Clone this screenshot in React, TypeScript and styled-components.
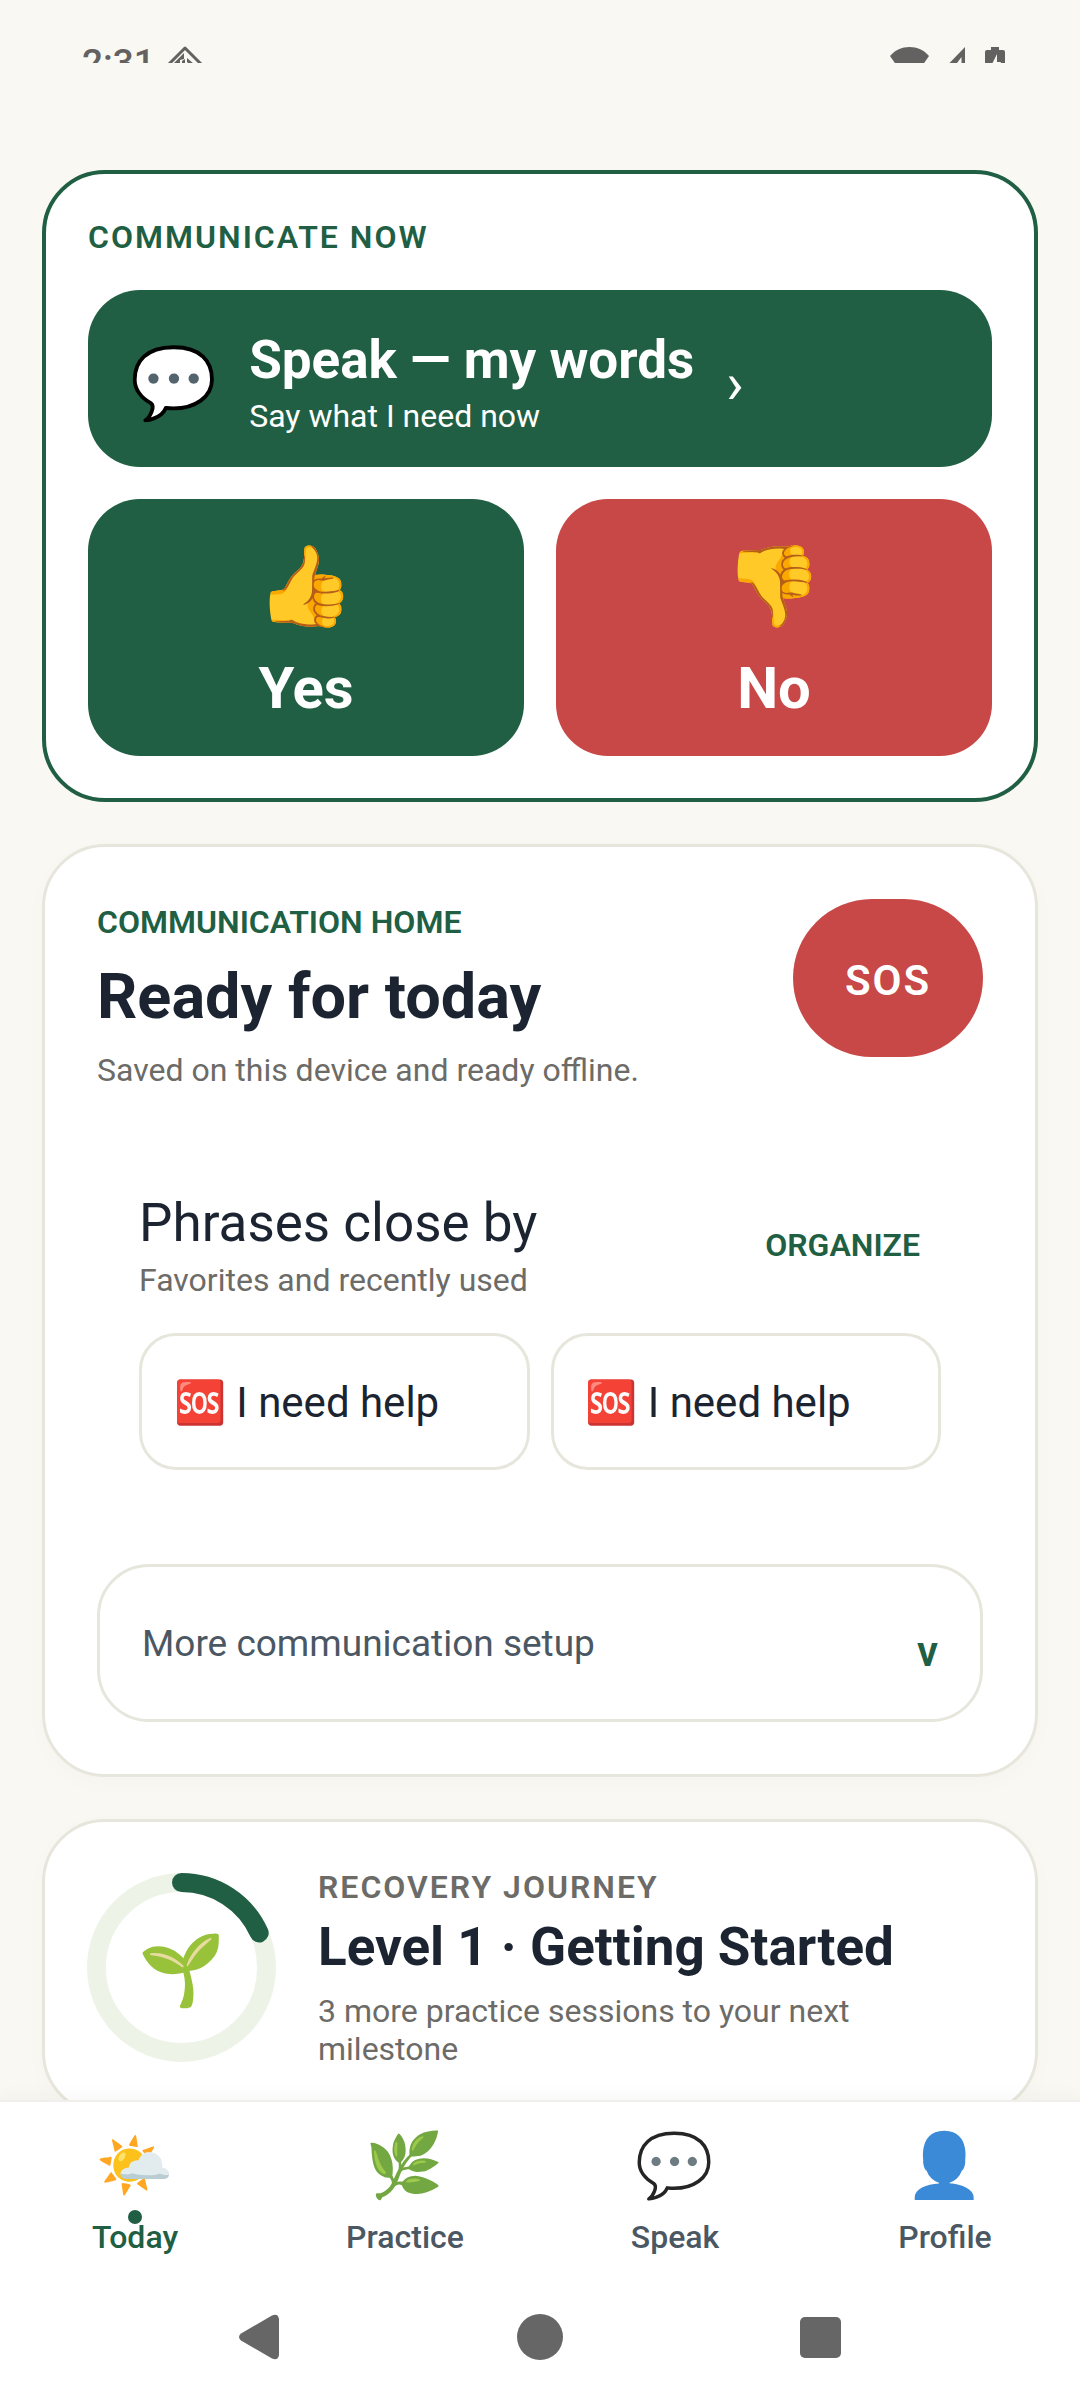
import React, { useState } from 'react';
import styled, { createGlobalStyle, css } from 'styled-components';

const c = {
  page: '#f9f8f3',
  surface: '#ffffff',
  green: '#205f43',
  red: '#c84747',
  ink: '#1b2430',
  slate: '#4b5863',
  muted: '#6c6b67',
  line: '#e7e6dc',
  ring: '#edf4e7',
  system: '#636260',
};

const Global = createGlobalStyle`
  *, *::before, *::after { box-sizing: border-box; }
  body {
    margin: 0;
    background: ${c.page};
    color: ${c.ink};
    font-family: Roboto, 'Noto Sans', sans-serif;
    -webkit-font-smoothing: antialiased;
  }
  h1, h2, h3, p { margin: 0; font-weight: 400; }
  button {
    margin: 0;
    padding: 0;
    border: 0;
    background: none;
    color: inherit;
    font: inherit;
    text-align: left;
    cursor: pointer;
  }
`;

const Screen = styled.div`
  display: flex;
  flex-direction: column;
  height: 100vh;
`;

/* ---------- system chrome ---------- */

const StatusBar = styled.header`
  display: flex;
  justify-content: space-between;
  flex: none;
  height: 63px;
  padding: 41px 75px 0 82px;
  overflow: hidden;
  color: ${c.system};
`;

const StatusGroup = styled.div<{ $gap: number }>`
  display: flex;
  align-items: flex-start;
  gap: ${(p) => p.$gap}px;
  height: 44px;
`;

const Clock = styled.time`
  font-size: 37px;
  line-height: 44px;
  font-weight: 500;
`;

const StatusIcon = styled.svg`
  display: block;
  flex: none;
  margin-top: 5px;
  fill: currentColor;
`;

const SystemBar = styled.div`
  display: flex;
  height: 126px;
  padding: 0 11%;
`;

const SystemButton = styled.button`
  display: flex;
  flex: 1;
  align-items: center;
  justify-content: center;
  color: #666666;

  svg {
    display: block;
    fill: currentColor;
  }
`;

/* ---------- shared type ---------- */

const Overline = styled.p<{ $tone?: 'green' | 'muted'; $tracked?: boolean }>`
  font-size: 32px;
  line-height: 42px;
  font-weight: 600;
  color: ${(p) => (p.$tone === 'muted' ? c.muted : c.green)};
  letter-spacing: ${(p) => (p.$tracked ? '2px' : 'normal')};
`;

const Title = styled.h2<{ $bold?: boolean }>`
  font-size: 53px;
  line-height: 64px;
  font-weight: ${(p) => (p.$bold ? 700 : 400)};
`;

const Caption = styled.p`
  font-size: 32px;
  line-height: 38px;
  color: ${c.muted};
`;

const Emoji = styled.span<{ $size: number; $dim?: boolean }>`
  display: block;
  flex: none;
  font-family: 'Noto Color Emoji', sans-serif;
  font-size: ${(p) => p.$size}px;
  line-height: 1;
  opacity: ${(p) => (p.$dim ? 0.85 : 1)};
`;

/* ---------- cards ---------- */

const Feed = styled.main`
  display: flex;
  flex: 1;
  flex-direction: column;
  gap: 42px;
  min-height: 0;
  padding: 107px 42px 42px;
  overflow-y: auto;
  scrollbar-width: none;
`;

const Card = styled.section`
  flex: none;
  border: 3px solid ${c.line};
  border-radius: 63px;
  background: ${c.surface};
  box-shadow: 0 6px 24px rgba(60, 60, 40, 0.02);
`;

const NowCard = styled(Card)`
  display: flex;
  flex-direction: column;
  gap: 32px;
  padding: 42px;
  border: 4px solid ${c.green};
  box-shadow: none;
`;

const SpeakButton = styled.button`
  display: flex;
  align-items: center;
  gap: 32px;
  padding: 38px 42px 30px;
  border-radius: 52px;
  background: ${c.green};
  color: #ffffff;
`;

const SpeakText = styled.span`
  display: flex;
  flex-direction: column;
  gap: 3px;
`;

const SpeakTitle = styled.span`
  font-size: 53px;
  line-height: 64px;
  font-weight: 700;
`;

const SpeakHint = styled.span`
  font-size: 32px;
  line-height: 42px;
`;

const Chevron = styled.span`
  font-size: 58px;
  line-height: 64px;
`;

const AnswerRow = styled.div`
  display: grid;
  grid-template-columns: 1fr 1fr;
  gap: 32px;
`;

const AnswerButton = styled.button<{ $tone: string }>`
  display: flex;
  flex-direction: column;
  align-items: center;
  gap: 28px;
  padding: 48px 32px 34px;
  border-radius: 52px;
  background: ${(p) => p.$tone};
  color: #ffffff;
`;

const AnswerLabel = styled.span`
  font-size: 58px;
  line-height: 68px;
  font-weight: 700;
`;

const HomeCard = styled(Card)`
  padding: 52px;
`;

const HomeHeader = styled.div`
  display: flex;
  align-items: flex-start;
  justify-content: space-between;
  gap: 32px;
`;

const HomeText = styled.div`
  display: flex;
  flex-direction: column;
  gap: 16px;
  padding-top: 2px;
`;

const HomeTitle = styled.h1`
  && { font-weight: 700; }
  font-size: 63px;
  line-height: 76px;
`;

const SosButton = styled.button`
  flex: none;
  width: 190px;
  height: 158px;
  padding-top: 4px;
  border-radius: 79px;
  background: ${c.red};
  color: #ffffff;
  font-size: 42px;
  font-weight: 600;
  letter-spacing: 2px;
  text-align: center;
`;

const Phrases = styled.section`
  display: flex;
  flex-direction: column;
  gap: 34px;
  margin-top: 60px;
  padding: 42px;
`;

const PhrasesHeader = styled.div`
  display: flex;
  align-items: center;
  justify-content: space-between;
`;

const PhrasesText = styled.div`
  display: flex;
  flex-direction: column;
  gap: 6px;
`;

const OrganizeButton = styled.button`
  padding: 21px;
  font-size: 32px;
  line-height: 42px;
  font-weight: 600;
  color: ${c.green};
`;

const PhraseGrid = styled.div`
  display: grid;
  grid-template-columns: 1fr 1fr;
  gap: 21px;
`;

const PhraseChip = styled.button`
  display: flex;
  align-items: center;
  gap: 10px;
  min-height: 137px;
  padding: 2px 32px 0;
  border: 3px solid ${c.line};
  border-radius: 37px;
  font-size: 42px;
  line-height: 50px;
`;

const MoreButton = styled.button`
  display: flex;
  align-items: center;
  justify-content: space-between;
  width: 100%;
  min-height: 158px;
  margin-top: 52px;
  padding: 2px 42px 0;
  border: 3px solid ${c.line};
  border-radius: 52px;
  color: ${c.slate};
  font-size: 37px;
  line-height: 44px;
`;

const MoreMark = styled.span`
  padding-top: 16px;
  color: ${c.green};
  font-size: 42px;
  font-weight: 600;
`;

const JourneyCard = styled(Card)`
  display: flex;
  align-items: center;
  gap: 42px;
  padding: 44px 42px;
`;

const Ring = styled.div`
  display: grid;
  flex: none;
  place-items: center;
  width: 189px;
  height: 189px;

  > * { grid-area: 1 / 1; }
  > span { padding-top: 6px; }
`;

const JourneyText = styled.div`
  display: flex;
  flex: 1;
  flex-direction: column;
  min-width: 0;
  padding-right: 42px;

  h2 { margin: 7px 0 13px; }
`;

/* ---------- bottom navigation ---------- */

const BottomArea = styled.footer`
  position: relative;
  flex: none;
  border-top: 2px solid #f0efec;
  background: ${c.surface};
  box-shadow: 0 -4px 16px rgba(60, 50, 40, 0.04);
`;

const Tabs = styled.nav`
  display: grid;
  grid-template-columns: repeat(4, 1fr);
`;

const Tab = styled.button<{ $active: boolean }>`
  display: flex;
  flex-direction: column;
  align-items: center;
  gap: 19px;
  padding: 32px 0 16px;
  color: ${c.slate};
  font-size: 32px;
  line-height: 42px;
  font-weight: 500;

  ${(p) =>
    p.$active &&
    css`
      color: ${c.green};
    `}
`;

const TabLabel = styled.span`
  position: relative;
`;

const ActiveDot = styled.span`
  position: absolute;
  top: -6px;
  left: 50%;
  width: 14px;
  height: 14px;
  margin-left: -7px;
  border-radius: 50%;
  background: ${c.green};
`;

const tabs = [
  { label: 'Today', icon: '🌤️' },
  { label: 'Practice', icon: '🌿' },
  { label: 'Speak', icon: '💬' },
  { label: 'Profile', icon: '👤' },
];

const phrases = [
  { id: 'favorite', icon: '🆘', text: 'I need help' },
  { id: 'recent', icon: '🆘', text: 'I need help' },
];

function ProgressRing({ value }: { value: number }) {
  const radius = 85;
  const length = 2 * Math.PI * radius;
  return (
    <svg width="189" height="189" viewBox="0 0 189 189" fill="none" aria-hidden="true">
      <circle cx="94.5" cy="94.5" r={radius} stroke={c.ring} strokeWidth="19" />
      <circle
        cx="94.5"
        cy="94.5"
        r={radius}
        stroke={c.green}
        strokeWidth="19"
        strokeLinecap="round"
        strokeDasharray={`${length * value} ${length}`}
        transform="rotate(-90 94.5 94.5)"
      />
    </svg>
  );
}

export default function App() {
  const [active, setActive] = useState('Today');

  return (
    <Screen>
      <Global />
      <StatusBar>
        <StatusGroup $gap={12}>
          <Clock>2:31</Clock>
          <StatusIcon width="36" height="36" viewBox="0 0 36 36" aria-hidden="true">
            <path d="M18 2 34 18 18 34 2 18z" fill="none" stroke="currentColor" strokeWidth="3" strokeLinejoin="round" />
            <path d="M17 7v6l-4 1v4H6zM15 15l3-2v5h-3zM20 12l7 6h-5l-2-2z" />
          </StatusIcon>
        </StatusGroup>
        <StatusGroup $gap={20}>
          <StatusIcon width="39" height="32" viewBox="0 0 39 32" aria-hidden="true">
            <path d="M0 10C5 4 12 1 19.500 1S34 4 39 10L19.500 38z" />
          </StatusIcon>
          <StatusIcon width="16" height="32" viewBox="0 0 16 32" aria-hidden="true">
            <path fillRule="evenodd" d="M16 1v31H-14zM12.500 11v18H-1z" />
          </StatusIcon>
          <StatusIcon width="20" height="32" viewBox="0 0 20 32" aria-hidden="true">
            <path fillRule="evenodd" d="M6 1h8v3h4q2 0 2 2v24q0 2-2 2H2q-2 0-2-2V6q0-2 2-2h4zM12 8 6 20h5v8l5-12h-4z" />
          </StatusIcon>
        </StatusGroup>
      </StatusBar>

      <Feed>
        <NowCard>
          <Overline $tracked>COMMUNICATE NOW</Overline>
          <SpeakButton type="button">
            <Emoji $size={70}>💬</Emoji>
            <SpeakText>
              <SpeakTitle>Speak — my words</SpeakTitle>
              <SpeakHint>Say what I need now</SpeakHint>
            </SpeakText>
            <Chevron>›</Chevron>
          </SpeakButton>
          <AnswerRow>
            <AnswerButton type="button" $tone={c.green}>
              <Emoji $size={79}>👍</Emoji>
              <AnswerLabel>Yes</AnswerLabel>
            </AnswerButton>
            <AnswerButton type="button" $tone={c.red}>
              <Emoji $size={79}>👎</Emoji>
              <AnswerLabel>No</AnswerLabel>
            </AnswerButton>
          </AnswerRow>
        </NowCard>

        <HomeCard>
          <HomeHeader>
            <HomeText>
              <Overline>COMMUNICATION HOME</Overline>
              <HomeTitle>Ready for today</HomeTitle>
              <Caption>Saved on this device and ready offline.</Caption>
            </HomeText>
            <SosButton type="button">SOS</SosButton>
          </HomeHeader>

          <Phrases>
            <PhrasesHeader>
              <PhrasesText>
                <Title>Phrases close by</Title>
                <Caption>Favorites and recently used</Caption>
              </PhrasesText>
              <OrganizeButton type="button">ORGANIZE</OrganizeButton>
            </PhrasesHeader>
            <PhraseGrid>
              {phrases.map((phrase) => (
                <PhraseChip type="button" key={phrase.id}>
                  <Emoji $size={42}>{phrase.icon}</Emoji>
                  {phrase.text}
                </PhraseChip>
              ))}
            </PhraseGrid>
          </Phrases>

          <MoreButton type="button" aria-expanded={false}>
            More communication setup
            <MoreMark>v</MoreMark>
          </MoreButton>
        </HomeCard>

        <JourneyCard>
          <Ring>
            <ProgressRing value={0.183} />
            <Emoji $size={70}>🌱</Emoji>
          </Ring>
          <JourneyText>
            <Overline $tone="muted" $tracked>RECOVERY JOURNEY</Overline>
            <Title $bold>Level 1 · Getting Started</Title>
            <Caption>3 more practice sessions to your next milestone</Caption>
          </JourneyText>
        </JourneyCard>
      </Feed>

      <BottomArea>
        <Tabs aria-label="Main">
          {tabs.map((tab) => (
            <Tab
              type="button"
              key={tab.label}
              $active={tab.label === active}
              aria-current={tab.label === active ? 'page' : undefined}
              onClick={() => setActive(tab.label)}
            >
              <Emoji $size={63} $dim={tab.label !== active}>{tab.icon}</Emoji>
              <TabLabel>
                {tab.label === active && <ActiveDot />}
                {tab.label}
              </TabLabel>
            </Tab>
          ))}
        </Tabs>
        <SystemBar>
          <SystemButton type="button" aria-label="Back">
            <svg width="42" height="46" viewBox="0 0 42 46">
              <path d="M34 1.500 3 19.500Q-1 23 3 26.500L34 44.500Q40 47 41 41V5Q40-1 34 1.500z" />
            </svg>
          </SystemButton>
          <SystemButton type="button" aria-label="Home">
            <svg width="46" height="46" viewBox="0 0 46 46">
              <circle cx="23" cy="23" r="23" />
            </svg>
          </SystemButton>
          <SystemButton type="button" aria-label="Recent apps">
            <svg width="41" height="41" viewBox="0 0 41 41">
              <rect width="41" height="41" rx="5" />
            </svg>
          </SystemButton>
        </SystemBar>
      </BottomArea>
    </Screen>
  );
}
